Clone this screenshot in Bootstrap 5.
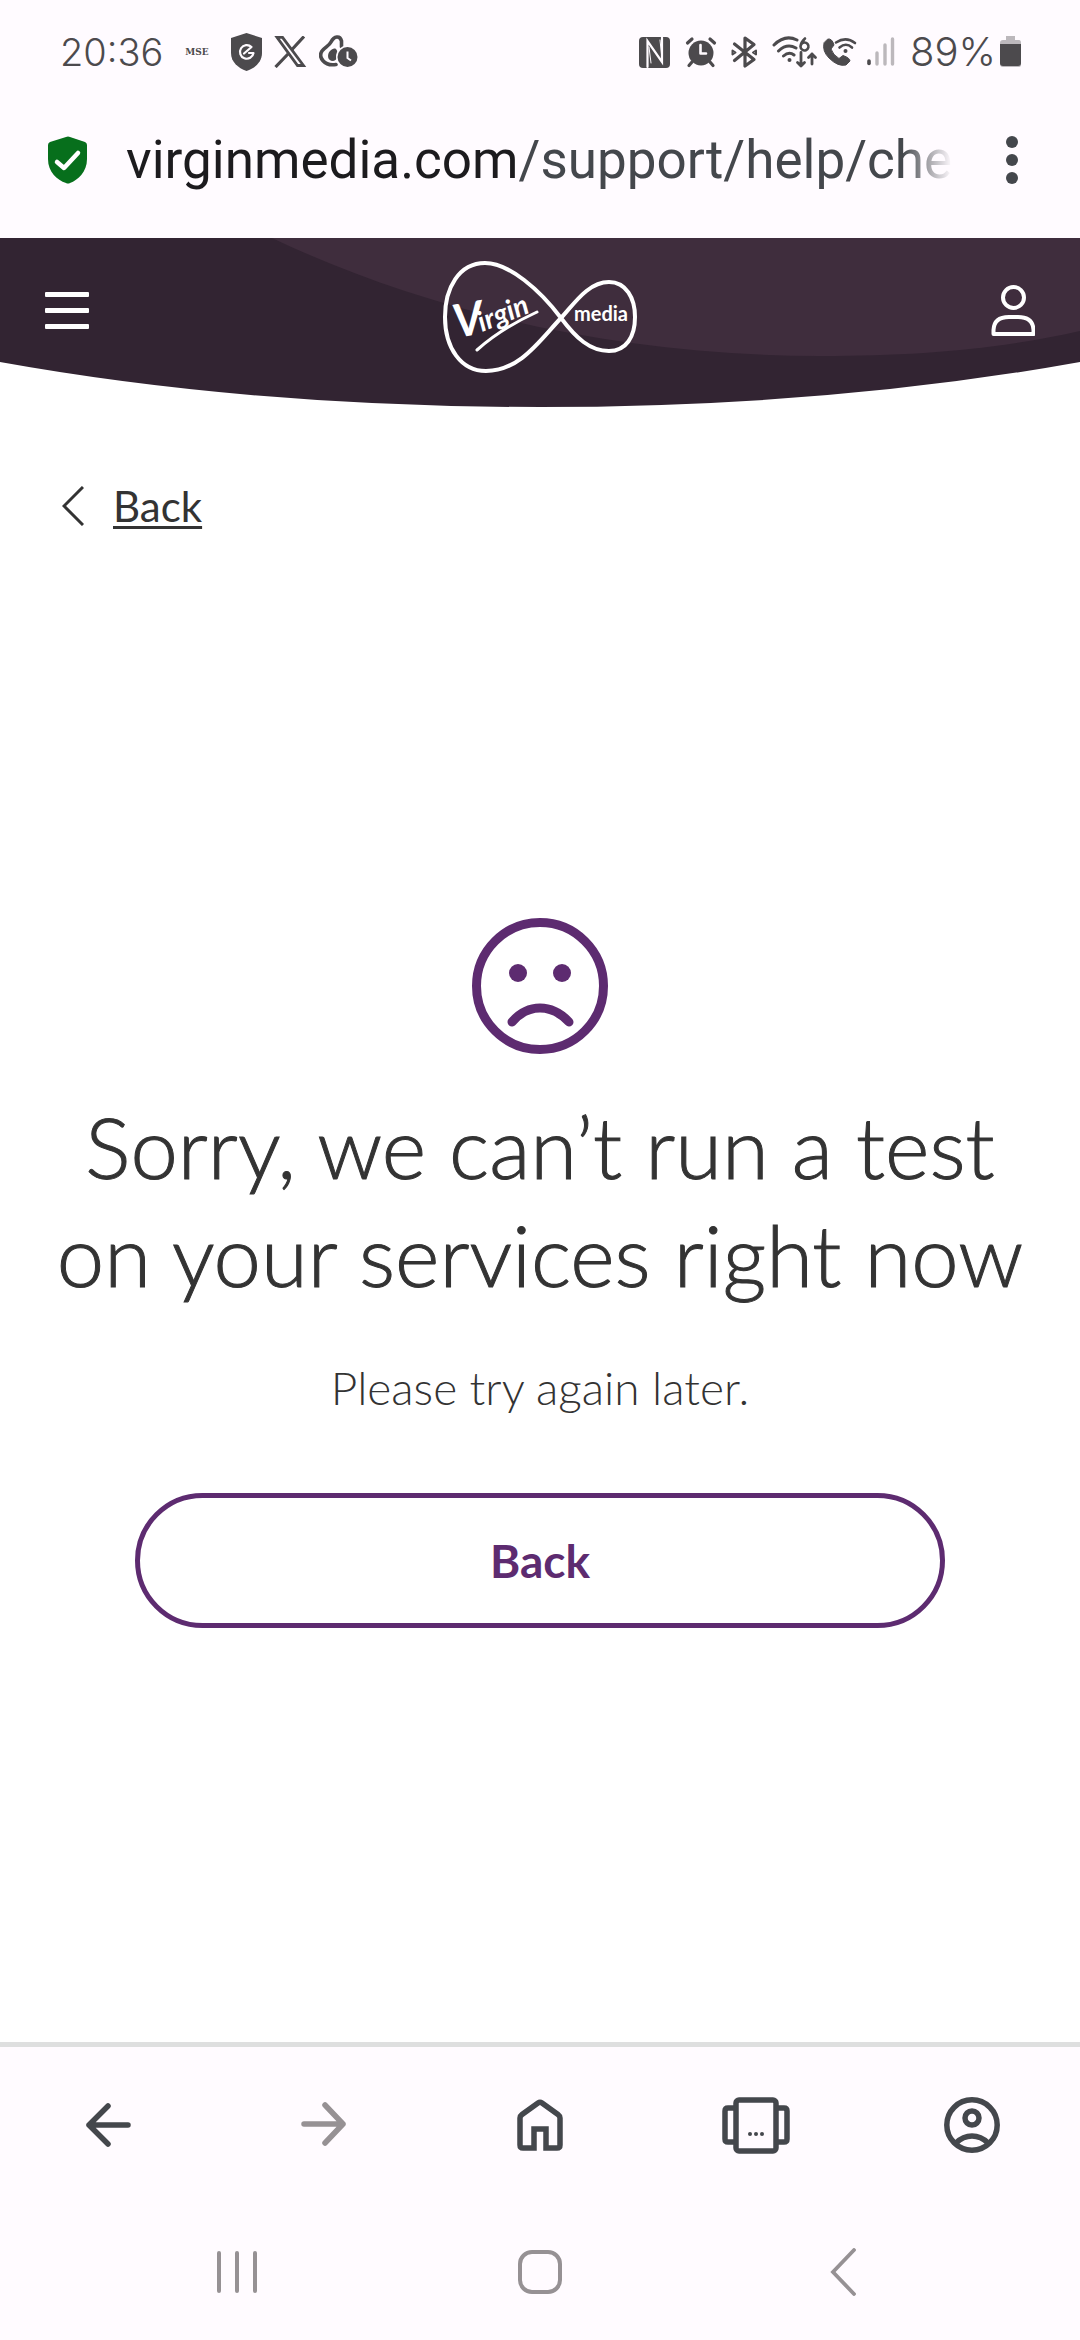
<!DOCTYPE html>
<html lang="en">
<head>
<meta charset="utf-8">
<meta name="viewport" content="width=device-width, initial-scale=1">
<title>Virgin Media – Service test</title>
<link rel="stylesheet" href="https://cdn.jsdelivr.net/npm/bootstrap@5.3.0/dist/css/bootstrap.min.css">
<style>
  :root { --chrome: #fffbff; --ink: #333333; --icon: #44474c; --muted: #969194; --plum: #5d2b70; --status: #4c4a4d; }
  body { font-family: Lato, "Liberation Sans", sans-serif; color: var(--ink); background: #fff; }
  svg { display: block; flex: none; }
  .status-bar { background: var(--chrome); color: var(--status); height: 104px; padding: 0 58px 0 60px; font: 40px/1 Inter, sans-serif; font-weight: 300; }
  .status-icons { gap: 12px; }
  .clock { font-size: 38px; }
  .address-bar { background: var(--chrome); height: 134px; padding: 0 62px 22px 48px; }
  .url-text { font: 53px/64px Roboto, sans-serif; color: var(--icon); margin-left: 38px;
    -webkit-mask-image: linear-gradient(to right, #000 94%, transparent); mask-image: linear-gradient(to right, #000 94%, transparent); }
  .url-host { color: #1c1b1e; }
  .plain-btn { background: none; border: 0; padding: 0; }
  .site-header { height: 169px; padding: 0 45px 24px; }
  .header-shape { inset: 0; width: 100%; height: 100%; z-index: -1; }
  .brand-logo { margin-top: 12px; }
  .back-link { color: var(--ink); font-size: 42px; line-height: 48px; font-weight: 400; margin: 75px 62px 0; gap: 29px; text-decoration: none; }
  .back-link span { text-decoration: underline; text-decoration-thickness: 3px; text-underline-offset: 4px; }
  .result { padding-top: 388px; }
  .result h1 { font-size: 85px; line-height: 108px; font-weight: 300; margin: 38px 0 0; -webkit-text-stroke: 1px currentColor; }
  .result p { font-size: 46px; line-height: 60px; font-weight: 300; margin: 50px 0 0; }
  .back-btn { width: 75%; height: 135px; margin-top: 75px; border: 5px solid var(--plum); border-radius: 68px; color: var(--plum); font-size: 46px; font-weight: 700; }
  .back-btn:hover { background: var(--plum); color: #fff; }
  .bottom-bar { background: var(--chrome); border-top: 5px solid #dedfdf; }
  .browser-nav { height: 156px; color: var(--icon); }
  .system-nav { height: 137px; padding: 0 86px; color: var(--muted); }
</style>
<script defer src="https://cdn.jsdelivr.net/npm/bootstrap@5.3.0/dist/js/bootstrap.bundle.min.js"></script>
</head>
<body class="d-flex flex-column min-vh-100">

<div class="status-bar d-flex align-items-center justify-content-between">
  <div class="status-icons d-flex align-items-center">
    <span class="clock">20:36</span>
    <svg width="44" height="16" viewBox="0 0 44 16"><text x="22" y="11" text-anchor="middle" font-family="DejaVu Serif, serif" font-weight="700" font-size="9" fill="currentColor">MSE</text></svg>
    <svg width="31" height="38" viewBox="228 32 31 38"><path fill="currentColor" d="M243.500 32 L259 37 V52 C259 61 252 67 243.500 70 C235 67 228 61 228 52 V37Z"/><path d="M241 52.500 L248.500 46 A6.800 6.800 0 1 0 250.500 52 L246 52" fill="none" stroke="#fffbff" stroke-width="2.200" stroke-linecap="round" stroke-linejoin="round"/></svg>
    <svg width="33" height="32" viewBox="274 36 33 32"><path d="M277 37.300 H282.500 L303.500 65.500 H297.500Z" fill="none" stroke="currentColor" stroke-width="2.800"/><path d="M304 36.500 L292 49.500 M288 54 L275.500 67" stroke="currentColor" stroke-width="3.200"/></svg>
    <svg width="40" height="34" viewBox="318 35 40 34"><path d="M335 64.500 C323 66.500 317 57 321 51 C324 47 328 46 330 42 C333 36 339 35 340.500 41 V47" fill="none" stroke="currentColor" stroke-width="3.600" stroke-linecap="round"/><path d="M335 49 C338 52 337 61 332 61 C326 61 326 54 329 51 C331 49 333 48 335 49Z" fill="currentColor"/><circle cx="346.500" cy="57" r="11.500" fill="#fffbff"/><circle cx="346.500" cy="57" r="10" fill="currentColor"/><path d="M346.500 51.500 V58 L350 60.500" stroke="#fffbff" stroke-width="2" fill="none"/></svg>
  </div>
  <div class="d-flex align-items-center">
    <svg width="268" height="36" viewBox="638 33 268 36" fill="none" stroke="currentColor" stroke-linecap="round" stroke-linejoin="round">
      <rect x="639" y="36" width="31" height="31" rx="4" fill="currentColor" stroke="none"/>
      <path d="M647.500 66 V40 L662 61 V36.500" stroke="#fffbff" stroke-width="2.200" stroke-linejoin="miter"/><path d="M649 46 L651 62 M660 39 L662 58" stroke="#fffbff" stroke-width="1"/>
      <circle cx="701" cy="52" r="12.500" fill="currentColor" stroke="none"/><path d="M700.500 44 V52.500 H706" stroke="#fffbff" stroke-width="2.600"/><path d="M687.500 42 L692 38 M710 38 L714.500 42 M692 61 L689 64.500 M710 61 L713 64.500" stroke-width="3.200"/>
      <path d="M734.500 43 L754 58.500 L745 65 V37 L754 43.500 L734.500 59.500" stroke-width="3.200"/><path d="M732.500 49.500 L735.500 51.500 L732.500 53.500Z M756 49.500 L753 51.500 L756 53.500Z" stroke-width="2"/>
      <path d="M774 44 Q785 33 797 39 M778.500 50 Q787 42 796 47 M783.500 55 Q789 50 794 54" stroke-width="3"/><circle cx="789.500" cy="59" r="2" fill="currentColor" stroke="none"/>
      <path d="M805 37.500 Q801 41 800.500 45.500 A4 4 0 1 0 801 43.500" stroke-width="2.600"/><path d="M801 51.500 V65 M797.500 61.500 L801 65 L804.500 61.500 M812 63 V53 M808.500 56.500 L812 53 L815.500 56.500" stroke-width="2.800"/>
      <path d="M824 42 Q822 50 829 57 Q838 66 846 64 L850 60 Q850 57 843 54.500 L839 57.500 Q833 54 831 48 L834 44 Q832 37 828 38Z" fill="currentColor" stroke-width="1"/>
      <path d="M836 41.500 Q846 35 855 42 M839.500 46.500 Q846 41 852 46.500" stroke-width="2.600"/><circle cx="845.500" cy="50" r="2" fill="currentColor" stroke="none"/>
      <path d="M869 60 V62.500" stroke-width="3.600"/><path d="M877 52 V63 M885 44 V63 M892.500 38 V63" stroke="#bcb8bc" stroke-width="3.400"/>
    </svg>
    <span class="ms-1">89%</span>
    <svg class="ms-1" width="22" height="32" viewBox="0 0 22 32"><path d="M6 0 H15 V4 H19 Q21 4 21 7 V29 Q21 31 18 31 H3 Q0 31 0 28 V7 Q0 4 3 4 H6Z" fill="#bcb8bc"/><path d="M0 8 H21 V27 Q21 30 18 30 H3 Q0 30 0 27Z" fill="currentColor"/></svg>
  </div>
</div>

<div class="address-bar d-flex align-items-center">
  <svg width="40" height="48" viewBox="0 0 40 48"><path fill="#076f1c" d="M18 1 Q20 0 22 1 L37 6 Q39 7 39 9 V23 C39 36 30 44 22 47 Q20 48 18 47 C9 44 0 36 0 23 V9 Q0 7 2 6Z"/><path d="M9 26 L16 32 L30 17" fill="none" stroke="#fff" stroke-width="4.500" stroke-linecap="round" stroke-linejoin="round"/></svg>
  <div class="url-text text-nowrap"><span class="url-host">virginmedia.com</span>/support/help/che</div>
  <button class="plain-btn ms-auto" aria-label="Menu"><svg width="12" height="48" viewBox="0 0 12 48" fill="#44474c"><circle cx="6" cy="6" r="6"/><circle cx="6" cy="24" r="6"/><circle cx="6" cy="42" r="6"/></svg></button>
</div>

<header class="site-header position-relative z-0 d-flex align-items-center justify-content-between">
  <svg class="header-shape position-absolute" viewBox="0 238 1080 169" preserveAspectRatio="none">
    <clipPath id="bowl"><path d="M0 238 H1080 V362 Q830 407 540 407 Q250 407 0 362Z"/></clipPath>
    <g clip-path="url(#bowl)"><rect y="238" width="1080" height="169" fill="#322432"/><path d="M272 238 C430 313 620 356 820 356 C920 356 1000 349 1080 331 V238Z" fill="#3f2d3d"/></g>
  </svg>
  <button class="plain-btn" aria-label="Open menu"><svg width="46" height="38" viewBox="0 0 46 38" fill="#fff"><rect width="44" height="5" rx="1"/><rect y="16" width="44" height="5" rx="1"/><rect y="32" width="44" height="5" rx="1"/></svg></button>
  <a href="#" aria-label="Virgin Media"><svg class="brand-logo" width="196" height="114" viewBox="442 260 196 114">
    <path d="M561 318 C540 290 509 263 485 263 C459 263 445 288 445 317 C445 348 461 371 486 371 C520 371 540 340 561 318 C574 304 588 282 609 282 C626 282 635 298 635 317 C635 337 626 351 609 351 C590 351 576 338 561 318Z" fill="none" stroke="#fff" stroke-width="4"/>
    <g font-family="Lato, sans-serif" font-style="italic" font-weight="700" fill="#fff">
      <text transform="translate(456 338) rotate(-10)" font-size="46">V</text>
      <text transform="translate(482 332) rotate(-22)" font-size="28">irgin</text>
    </g>
    <path d="M477 350 Q502 328 537 312" fill="none" stroke="#fff" stroke-width="3" stroke-linecap="round"/>
    <text x="601" y="321" text-anchor="middle" font-family="Lato, sans-serif" font-weight="700" font-size="20" fill="#fff">media</text>
  </svg></a>
  <button class="plain-btn" aria-label="Account"><svg width="46" height="54" viewBox="988 285 46 54" fill="none" stroke="#fff" stroke-width="4"><circle cx="1012.500" cy="298.500" r="10.500"/><path d="M992.500 335 V331 Q993 318 1008 318 H1017 Q1032 318 1032.500 331 V335Z" stroke-linejoin="round"/></svg></button>
</header>

<main class="flex-grow-1 d-flex flex-column">
  <a class="back-link d-inline-flex align-items-center align-self-start" href="#"><svg width="22" height="40" viewBox="0 0 22 40"><path d="M21 1 L2 20 L21 39" fill="none" stroke="currentColor" stroke-width="3"/></svg><span>Back</span></a>
  <section class="result d-flex flex-column align-items-center text-center">
    <svg width="136" height="136" viewBox="0 0 136 136" fill="none" stroke="#5d2b70"><circle cx="68" cy="68" r="63.500" stroke-width="9"/><circle cx="46" cy="55" r="9" fill="#5d2b70" stroke="none"/><circle cx="90" cy="55" r="9" fill="#5d2b70" stroke="none"/><path d="M40 104 Q52 90 68 90 Q84 90 97 104" stroke-width="9" stroke-linecap="round"/></svg>
    <h1>Sorry, we can’t run a test<br>on your services right now</h1>
    <p>Please try again later.</p>
    <button type="button" class="btn back-btn">Back</button>
  </section>
</main>

<footer class="bottom-bar">
  <nav class="browser-nav row g-0 align-items-center" aria-label="Browser">
    <div class="col d-flex justify-content-center"><button class="plain-btn" aria-label="Back"><svg width="46" height="46" viewBox="0 0 46 46" fill="none" stroke="#44474c" stroke-width="5.500" stroke-linecap="round" stroke-linejoin="round"><path d="M43 23 H4 M23 4 L4 23 L23 42"/></svg></button></div>
    <div class="col d-flex justify-content-center"><button class="plain-btn" aria-label="Forward"><svg width="46" height="46" viewBox="0 0 46 46" fill="none" stroke="#969194" stroke-width="5.500" stroke-linecap="round" stroke-linejoin="round"><path d="M3 22 H42 M24 3 L42 22 L24 41"/></svg></button></div>
    <div class="col d-flex justify-content-center"><button class="plain-btn" aria-label="Home"><svg width="46" height="54" viewBox="0 0 46 54" fill="none" stroke="#44474c" stroke-width="5.500" stroke-linejoin="round"><path d="M17 50 H6 Q3 50 3 47 V20 Q3 18 5 16.500 L21 5 Q23 3.500 25 5 L41 16.500 Q43 18 43 20 V47 Q43 50 40 50 H29 V31 H17Z" stroke-linejoin="miter"/></svg></button></div>
    <div class="col d-flex justify-content-center"><button class="plain-btn" aria-label="Tabs"><svg width="68" height="58" viewBox="0 0 68 58" fill="none" stroke="#44474c" stroke-width="5.500"><rect x="14" y="4" width="40" height="51" rx="3"/><path d="M14 12 H6 Q3 12 3 15 V43 Q3 46 6 46 H14 M54 12 H62 Q65 12 65 15 V43 Q65 46 62 46 H54"/><g fill="#44474c" stroke="none"><circle cx="28" cy="38" r="2"/><circle cx="34" cy="38" r="2"/><circle cx="40" cy="38" r="2"/></g></svg></button></div>
    <div class="col d-flex justify-content-center"><button class="plain-btn" aria-label="Profile"><svg width="56" height="56" viewBox="0 0 56 56" fill="none" stroke="#44474c" stroke-width="5.500"><circle cx="28" cy="28" r="25.200"/><circle cx="28" cy="21" r="7"/><path d="M12 46 Q19 39 28 39 Q37 39 44 46"/></svg></button></div>
  </nav>
  <nav class="system-nav row g-0 align-items-center" aria-label="System">
    <div class="col d-flex justify-content-center"><button class="plain-btn" aria-label="Recent apps"><svg width="40" height="44" viewBox="0 0 40 44" stroke="#969194" stroke-width="4" stroke-linecap="round"><path d="M2 3 V41 M20 3 V41 M38 3 V41"/></svg></button></div>
    <div class="col d-flex justify-content-center"><button class="plain-btn" aria-label="Home screen"><svg width="44" height="44" viewBox="0 0 44 44" fill="none" stroke="#969194" stroke-width="4"><rect x="2" y="2" width="40" height="40" rx="12"/></svg></button></div>
    <div class="col d-flex justify-content-center"><button class="plain-btn" aria-label="System back"><svg width="26" height="48" viewBox="0 0 26 48" fill="none" stroke="#969194" stroke-width="3.800" stroke-linecap="round"><path d="M24 2 L3 24 L24 46"/></svg></button></div>
  </nav>
</footer>
</body>
</html>
